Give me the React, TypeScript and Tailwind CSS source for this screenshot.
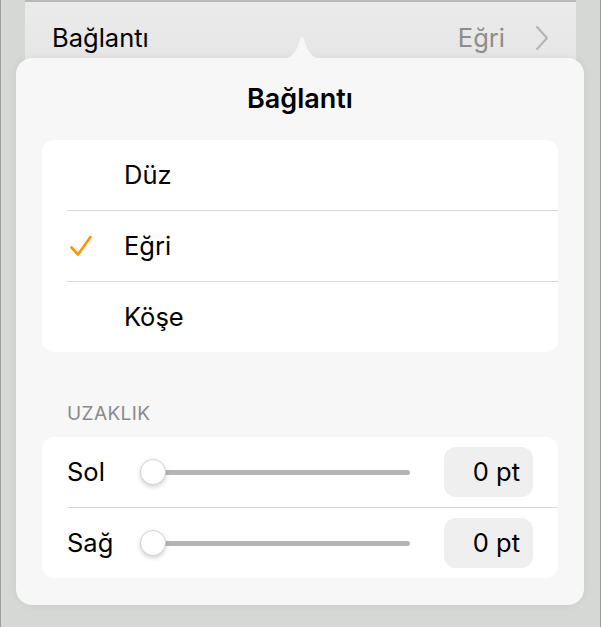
const font = { fontFamily: 'Inter, "Noto Sans", sans-serif' };

const Chevron = () => (
  <svg width="14" height="26" viewBox="0 0 14 26" className="ml-[30px]">
    <path d="M2 2 L12 13 L2 24" fill="none" stroke="#b3b3b3" strokeWidth="2" strokeLinecap="round" strokeLinejoin="round" />
  </svg>
);

const Tick = () => (
  <svg width="24" height="22" viewBox="0 0 24 22">
    <path d="M2.5 12.5 L9 19.5 L21.5 2" fill="none" stroke="#ff9500" strokeWidth="2.6" strokeLinecap="round" strokeLinejoin="round" />
  </svg>
);

const Slider = () => (
  <div className="relative flex items-center w-[270px] h-[28px] ml-[29px]">
    <div className="h-[5px] w-full rounded-full bg-[#b5b5b5]" />
    {/* thumb */}
    <div className="absolute left-0 top-[1px] w-[26px] h-[26px] rounded-full bg-white border border-[#d4d4d4] shadow-[0_2px_4px_rgba(0,0,0,0.18)]" />
  </div>
);

const SpacingRow = ({ label }: { label: string }) => (
  <div className="flex items-center h-[70px] pl-[25px] pr-[25px]">
    <span className="w-[44px] text-[25.5px] text-black">{label}</span>
    <Slider />
    <div className="ml-auto flex items-center justify-end w-[89px] h-[50px] rounded-xl bg-[#efeff0] pr-[13px] text-[25.5px] text-black">
      0 pt
    </div>
  </div>
);

export default function App() {
  const options = ['Düz', 'Eğri', 'Köşe'];
  const selected = 'Eğri';

  return (
    <div
      className="relative w-[601px] h-[627px] overflow-hidden bg-[#d6d8d6] border-x border-[#9c9c9c]"
      style={font}
    >
      {/* row behind the popover */}
      <div className="mx-[24px] h-[90px] bg-gradient-to-b from-[#ebebeb] to-[#e2e3e2] border-t-2 border-[#b9b9b9]">
        <div className="flex items-center h-[72px] pl-[27px] pr-[27px]">
          <span className="text-[25.5px] text-black">Bağlantı</span>
          <span className="ml-auto text-[25.5px] text-[#8d8d8d]">Eğri</span>
          <Chevron />
        </div>
      </div>

      {/* popover */}
      <div className="absolute left-[15px] top-[58px] w-[568px] h-[547px] rounded-2xl bg-[#f7f7f7] shadow-[0_0_8px_rgba(0,0,0,0.06)]">
        <svg className="absolute left-[263px] -top-[22px]" width="46" height="23" viewBox="0 0 46 23">
          <path d="M0 23 C10 23 14 20 18 12 C20 8 21 1 23 1 C25 1 26 8 28 12 C32 20 36 23 46 23 Z" fill="#f7f7f7" />
        </svg>

        <div className="flex items-center justify-center h-[82px] text-[27px] font-semibold text-black">
          Bağlantı
        </div>

        <div className="mx-[26px] rounded-xl bg-white">
          {options.map((o, i) => (
            <div key={o}>
              {i > 0 && <div className="ml-[25px] h-px bg-[#d9d9dc]" />}
              <div className="flex items-center h-[70px] pl-[27px]">
                <span className="w-[55px] flex">{o === selected && <Tick />}</span>
                <span className="text-[25.5px] text-black">{o}</span>
              </div>
            </div>
          ))}
        </div>

        <div className="pl-[51px] pt-[50px] pb-[12px] text-[19px] tracking-[0.4px] text-[#8a8a8e] leading-[23px]">
          UZAKLIK
        </div>

        <div className="mx-[26px] rounded-xl bg-white">
          <SpacingRow label="Sol" />
          <div className="ml-[25px] h-px bg-[#d9d9dc]" />
          <SpacingRow label="Sağ" />
        </div>
      </div>
    </div>
  );
}
